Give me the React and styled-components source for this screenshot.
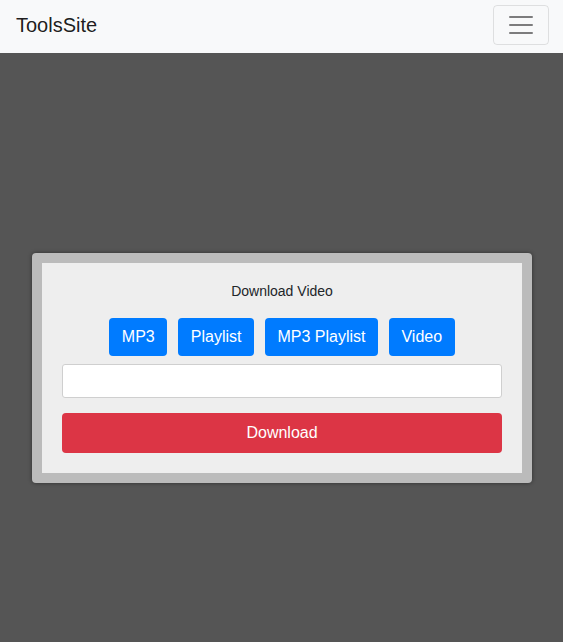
import React from "react";
import styled, { createGlobalStyle } from "styled-components";

const Global = createGlobalStyle`
  html, body { margin: 0; padding: 0; }
  body {
    font-family: "Liberation Sans", Arial, sans-serif;
    background: #555555;
    color: #212529;
  }
  * { box-sizing: border-box; }
`;

const Page = styled.div`
  min-height: 642px;
  background: #555555;
  display: flex;
  flex-direction: column;
`;

const Navbar = styled.nav`
  height: 53px;
  background: #f8f9fa;
  display: flex;
  align-items: center;
  justify-content: space-between;
  padding: 0 14px 0 16px;
`;

const Brand = styled.a`
  font-size: 20px;
  color: rgba(0, 0, 0, 0.9);
  text-decoration: none;
  line-height: 1.5;
  margin-top: -3px;
`;

const Toggler = styled.button`
  width: 56px;
  height: 40px;
  padding: 4px 12px;
  background: transparent;
  border: 1px solid rgba(0, 0, 0, 0.1);
  border-radius: 4px;
  display: flex;
  align-items: center;
  justify-content: center;
  margin-top: -3px;
`;

const Main = styled.main`
  padding: 200px 31px 0 32px;
`;

const CardOuter = styled.div`
  background: #bbbbbb;
  border-radius: 4px;
  padding: 10px;
  box-shadow: 0 0 4px rgba(0, 0, 0, 0.45);
`;

const CardInner = styled.div`
  background: #eeeeee;
  padding: 20px 20px 20px;
  display: flex;
  flex-direction: column;
`;

const Title = styled.div`
  font-size: 14px;
  line-height: 16px;
  text-align: center;
  color: #212529;
  margin-bottom: 19px;
`;

const ButtonRow = styled.div`
  display: flex;
  justify-content: center;
  gap: 11px;
  margin-bottom: 8px;
`;

const TypeButton = styled.button`
  font-family: "Liberation Sans", Arial, sans-serif;
  font-size: 16px;
  line-height: 24px;
  padding: 7px 12.5px;
  border: none;
  border-radius: 4px;
  background: #007bff;
  color: #ffffff;
`;

const UrlInput = styled.input`
  width: 100%;
  height: 34px;
  border: 1px solid #cfcfcf;
  border-radius: 3px;
  background: #ffffff;
  font-size: 16px;
  padding: 4px 10px;
  margin-bottom: 15px;
  outline: none;
`;

const DownloadButton = styled.button`
  width: 100%;
  height: 40px;
  border: none;
  border-radius: 4px;
  background: #dc3545;
  color: #ffffff;
  font-family: "Liberation Sans", Arial, sans-serif;
  font-size: 16px;
`;

export default function App() {
  return (
    <>
      <Global />
      <Page>
        <Navbar>
          <Brand href="#">ToolsSite</Brand>
          <Toggler aria-label="menu">
            <svg width="30" height="30" viewBox="0 0 30 30">
              <path
                d="M4 7h22M4 15h22M4 23h22"
                stroke="rgba(0,0,0,0.5)"
                strokeWidth="2"
                strokeLinecap="round"
              />
            </svg>
          </Toggler>
        </Navbar>
        <Main>
          <CardOuter>
            <CardInner>
              <Title>Download Video</Title>
              <ButtonRow>
                <TypeButton>MP3</TypeButton>
                <TypeButton>Playlist</TypeButton>
                <TypeButton>MP3 Playlist</TypeButton>
                <TypeButton>Video</TypeButton>
              </ButtonRow>
              <UrlInput type="text" />
              <DownloadButton>Download</DownloadButton>
            </CardInner>
          </CardOuter>
        </Main>
      </Page>
    </>
  );
}
